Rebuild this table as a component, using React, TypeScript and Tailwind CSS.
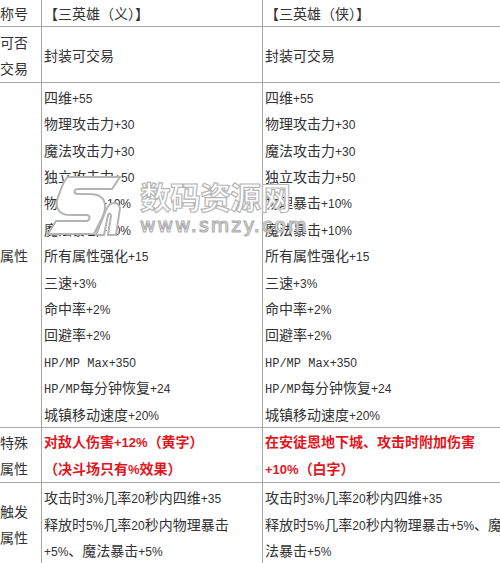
import type { ReactNode } from "react";

type Row = {
  label: string[];
  left: string[];
  right: string[];
  height: number;
  red?: boolean;
};

const attrs = [
  "四维+55",
  "物理攻击力+30",
  "魔法攻击力+30",
  "独立攻击力+50",
  "物理暴击+10%",
  "魔法暴击+10%",
  "所有属性强化+15",
  "三速+3%",
  "命中率+2%",
  "回避率+2%",
  "HP/MP Max+350",
  "HP/MP每分钟恢复+24",
  "城镇移动速度+20%",
];

const rows: Row[] = [
  { label: ["称号"], left: ["【三英雄（义）】"], right: ["【三英雄（侠）】"], height: 24 },
  { label: ["可否", "交易"], left: ["封装可交易"], right: ["封装可交易"], height: 56 },
  { label: ["属性"], left: attrs, right: attrs, height: 345 },
  {
    label: ["特殊", "属性"],
    left: ["对敌人伤害+12%（黄字）", "（决斗场只有%效果）"],
    right: ["在安徒恩地下城、攻击时附加伤害", "+10%（白字）"],
    height: 55,
    red: true,
  },
  {
    label: ["触发", "属性"],
    left: ["攻击时3%几率20秒内四维+35", "释放时5%几率20秒内物理暴击", "+5%、魔法暴击+5%"],
    right: ["攻击时3%几率20秒内四维+35", "释放时5%几率20秒内物理暴击+5%、魔", "法暴击+5%"],
    height: 82,
  },
];

// split a line into CJK runs, HP/MP runs and latin runs so each gets its own face
function Txt({ s, red }: { s: string; red?: boolean }) {
  const parts = s.split(/(HP\/MP Max|HP\/MP|[\u3000-\u9fff\uff00-\uffef]+)/).filter(Boolean);
  const out: ReactNode[] = parts.map((p, i) => {
    if (p.startsWith("HP/MP"))
      return (
        <span key={i} className="font-['Liberation_Mono',monospace] text-[12px] leading-none">
          {p}
        </span>
      );
    if (/^[\u3000-\u9fff\uff00-\uffef]+$/.test(p)) return <span key={i}>{p}</span>;
    return (
      <span
        key={i}
        className={
          red
            ? "font-['Liberation_Sans',sans-serif] text-[13px] leading-none"
            : "font-['Liberation_Sans',sans-serif] text-[12px] leading-none"
        }
      >
        {p}
      </span>
    );
  });
  return <>{out}</>;
}

function Watermark() {
  return (
    <div className="absolute left-[46px] top-[174px] flex items-start gap-[18px] pointer-events-none">
      <svg width="76" height="64" viewBox="0 0 76 64">
        <path
          d="M22 3 H74 L66 15 H32 C28 15 27 19 31 20 H44 C60 20 62 32 56 44 L48 60 H2 L10 47 H40 C44 47 45 42 41 41 H24 C10 41 8 30 14 18 C17 9 19 5 22 3 Z"
          fill="#ffffff"
          stroke="#b4b4b4"
          strokeWidth="2"
        />
        <path
          d="M50 61 L60 36 C64 27 72 27 74 34 L70 61 H62 L65 42 C65 39 63 39 62 41 L58 61 Z"
          fill="#ffffff"
          stroke="#b4b4b4"
          strokeWidth="2"
        />
      </svg>
      <div className="flex flex-col pt-[6px]">
        <div className="text-[31px] leading-[32px] font-bold text-white tracking-[-1px] [-webkit-text-stroke:1.2px_#b8b8b8] font-['Noto_Sans_CJK_SC',sans-serif]">
          数码资源网
        </div>
        <div className="mt-[4px] text-[19px] leading-[18px] text-white tracking-[2px] [-webkit-text-stroke:1.2px_#b0b0b0] font-['DejaVu_Sans',sans-serif]">
          www.smzy.com
        </div>
      </div>
    </div>
  );
}

export default function App() {
  return (
    <div className="relative w-[500px] h-[563px] overflow-hidden bg-white text-[#333] text-[14px] font-['Noto_Sans_CJK_SC',sans-serif]">
      <table className="table-fixed border-collapse ml-[-14px] mt-[-1px] w-[521px]">
        <colgroup>
          <col className="w-[55px]" />
          <col className="w-[221px]" />
          <col className="w-[245px]" />
        </colgroup>
        <tbody>
          {rows.map((r, i) => (
            <tr key={i} style={{ height: r.height }}>
              <td className="border border-[#a8a8a8] text-center align-middle p-0">
                {r.label.map((l) => (
                  <div key={l} className="h-[26px] leading-[26px]">
                    {l}
                  </div>
                ))}
              </td>
              {[r.left, r.right].map((lines, j) => (
                <td
                  key={j}
                  className={
                    r.red
                      ? "border border-[#a8a8a8] align-middle pl-[2px] pr-0 py-0 font-bold text-[#e3161d]"
                      : "border border-[#a8a8a8] align-middle pl-[2px] pr-0 py-0"
                  }
                >
                  {lines.map((l, k) => (
                    <div
                      key={k}
                      className={
                        r.red
                          ? "h-[27px] leading-[27px] whitespace-nowrap overflow-hidden"
                          : "h-[26.4px] leading-[26.4px] whitespace-nowrap overflow-hidden"
                      }
                    >
                      <Txt s={l} red={r.red} />
                    </div>
                  ))}
                </td>
              ))}
            </tr>
          ))}
        </tbody>
      </table>
      <Watermark />
    </div>
  );
}
